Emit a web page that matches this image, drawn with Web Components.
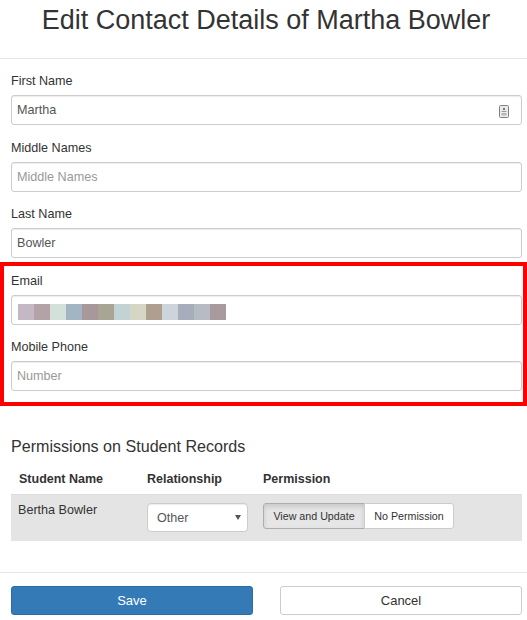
<!DOCTYPE html>
<html>
<head>
<meta charset="utf-8">
<style>
  html, body { margin: 0; padding: 0; background: #fff; }
  body { font-family: "Liberation Sans", Arial, sans-serif; font-size: 14px; color: #333; }
</style>
</head>
<body>
<contact-form></contact-form>
<script>
(function () {
    "use strict";

    const RING = 'box-sizing:border-box;border:1px solid #ccc;border-radius:3px;box-shadow:inset 0 1px 1px rgba(0,0,0,.075);background:#fff;';

    class FormField extends HTMLElement {
        constructor() {
            super();
            this.attachShadow({ mode: 'open' });
        }

        connectedCallback() {
            const label = this.getAttribute('label') || '';
            const value = this.getAttribute('value') || '';
            const holder = this.getAttribute('placeholder') || '';
            const text = value || holder;
            this.shadowRoot.innerHTML = `
                <style>
                    :host { display: block; height: 66.5px; font-size: 12.6px; }
                    label { display: block; height: 22px; line-height: 16px; font-size: 12.6px; color: #333; }
                    .box { ${RING} height: 30px; display: flex; align-items: center; justify-content: space-between; padding: 0 11px 0 5px; color: #555; }
                    .holder { color: #999; }
                </style>
                <label>${label}</label>
                <div class="box">
                    ${text ? `<span class="${value ? '' : 'holder'}">${text}</span>` : ''}
                    <slot></slot>
                </div>`;
        }
    }

    class PixelBar extends HTMLElement {
        constructor() {
            super();
            this.attachShadow({ mode: 'open' });
        }

        connectedCallback() {
            const colours = ['#c4b8c4', '#b3a3a6', '#d4e0da', '#a3b4c2', '#a89899', '#a8a595', '#c2d3d3', '#d6d6c5', '#ae9f90', '#cdd5db', '#a7aebb', '#b7bcc4', '#a99a9d'];
            this.shadowRoot.innerHTML = `
                <style>
                    :host { display: flex; margin: 4px 0 0 1px; }
                    i { display: block; width: 16px; height: 16px; }
                </style>
                ${colours.map(c => `<i style="background:${c}"></i>`).join('')}`;
        }
    }

    class PermissionTable extends HTMLElement {
        constructor() {
            super();
            this.attachShadow({ mode: 'open' });
        }

        connectedCallback() {
            this.shadowRoot.innerHTML = `
                <style>
                    :host { display: block; font-size: 12.6px; }
                    .row { display: grid; grid-template-columns: 128px 116px 1fr; }
                    .head { height: 32px; align-items: center; font-size: 12.5px; font-weight: bold; padding-left: 8px; border-bottom: 1px solid #ddd; box-sizing: border-box; }
                    .body { height: 46px; grid-template-columns: 129px 116px 1fr; background: #e4e4e4; padding: 8px 0 0 7px; box-sizing: border-box; }
                    .name { line-height: 15px; }
                    .select { ${RING} width: 101px; height: 29px; display: flex; align-items: center; justify-content: space-between; padding: 0 6px 0 9px; border-radius: 4px; color: #555; }
                    .select svg { display: block; }
                    .toggle { display: flex; height: 26px; font-size: 10.7px; color: #333; }
                    .toggle span { ${RING} display: flex; align-items: center; justify-content: center; }
                    .on { width: 102px; background: #e6e6e6 !important; border-color: #adadad !important; border-radius: 3px 0 0 3px !important; box-shadow: inset 0 3px 5px rgba(0,0,0,.125) !important; }
                    .off { width: 90px; margin-left: -1px; border-radius: 0 3px 3px 0 !important; box-shadow: none !important; }
                </style>
                <div class="row head">
                    <div>Student Name</div><div>Relationship</div><div>Permission</div>
                </div>
                <div class="row body">
                    <div class="name">Bertha Bowler</div>
                    <div class="select">Other
                        <svg width="6" height="5" viewBox="0 0 6 5"><path d="M0 0h6L3 5z" fill="#555"/></svg>
                    </div>
                    <div class="toggle"><span class="on">View and Update</span><span class="off">No Permission</span></div>
                </div>`;
        }
    }

    class ContactForm extends HTMLElement {
        constructor() {
            super();
            this.attachShadow({ mode: 'open' });
        }

        connectedCallback() {
            this.shadowRoot.innerHTML = `
                <style>
                    :host { display: block; width: 527px; height: 620px; overflow: hidden; color: #333; }
                    header { height: 59px; box-sizing: border-box; border-bottom: 1px solid #e5e5e5; text-align: center; padding-left: 5px; }
                    h1 { margin: 0; padding-top: 3px; font-size: 27px; line-height: 34px; font-weight: normal; }
                    .fields { padding: 14px 5px 0 11px; }
                    .alert { margin: -10.5px -5px 0 -11px; padding: 7px 1px 0 7px; height: 143.5px; box-sizing: border-box; border: 4px solid #f00; }
                    .alert form-field:first-child { height: 66.25px; }
                    h2 { margin: 0; padding: 30px 0 0; font-size: 16.1px; line-height: 20px; font-weight: normal; }
                    .perm { margin-top: 7.5px; }
                    footer { margin-top: 30.5px; border-top: 1px solid #e5e5e5; padding: 13.5px 5px 0 11px; display: flex; gap: 27px; }
                    button { flex: 1; height: 29px; box-sizing: border-box; font: 13px "Liberation Sans", Arial, sans-serif; border-radius: 3px; border: 1px solid #ccc; background: #fff; color: #333; padding: 0; }
                    button.primary { background: #337ab7; border-color: #2e6da4; color: #fff; }
                    svg { display: block; margin: 2px 1px 0 0; }
                </style>
                <header><h1>Edit Contact Details of Martha Bowler</h1></header>
                <div class="fields">
                    <form-field label="First Name" value="Martha">
                        <svg width="10" height="13" viewBox="0 0 10 13">
                            <rect x=".5" y=".5" width="9" height="12" rx="1" fill="#ececec" stroke="#808080"/>
                            <circle cx="5" cy="4" r="1.2" fill="#777"/>
                            <rect x="2.5" y="6" width="5" height="1" fill="#999"/>
                            <rect x="2.5" y="8" width="5" height="2.5" fill="#b5b5b5"/>
                        </svg>
                    </form-field>
                    <form-field label="Middle Names" placeholder="Middle Names"></form-field>
                    <form-field label="Last Name" value="Bowler"></form-field>
                    <div class="alert">
                        <form-field label="Email"><pixel-bar></pixel-bar></form-field>
                        <form-field label="Mobile Phone" placeholder="Number"></form-field>
                    </div>
                    <h2>Permissions on Student Records</h2>
                    <permission-table class="perm"></permission-table>
                </div>
                <footer>
                    <button class="primary">Save</button>
                    <button>Cancel</button>
                </footer>`;
        }
    }

    customElements.define('form-field', FormField);
    customElements.define('pixel-bar', PixelBar);
    customElements.define('permission-table', PermissionTable);
    customElements.define('contact-form', ContactForm);
})();
</script>
</body>
</html>
